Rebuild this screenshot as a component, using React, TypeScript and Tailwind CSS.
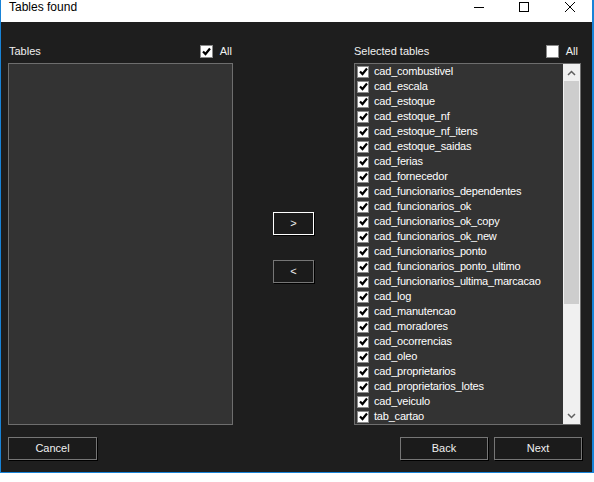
import React from 'react';

const tables = [
  'cad_combustivel',
  'cad_escala',
  'cad_estoque',
  'cad_estoque_nf',
  'cad_estoque_nf_itens',
  'cad_estoque_saidas',
  'cad_ferias',
  'cad_fornecedor',
  'cad_funcionarios_dependentes',
  'cad_funcionarios_ok',
  'cad_funcionarios_ok_copy',
  'cad_funcionarios_ok_new',
  'cad_funcionarios_ponto',
  'cad_funcionarios_ponto_ultimo',
  'cad_funcionarios_ultima_marcacao',
  'cad_log',
  'cad_manutencao',
  'cad_moradores',
  'cad_ocorrencias',
  'cad_oleo',
  'cad_proprietarios',
  'cad_proprietarios_lotes',
  'cad_veiculo',
  'tab_cartao',
];

function CheckBox({ checked, size = 13 }: { checked: boolean; size?: number }) {
  return (
    <span
      className="flex items-center justify-center bg-white border border-[#8a8a8a] shrink-0"
      style={{ width: size, height: size }}
    >
      {checked && (
        <svg width="9" height="9" viewBox="0 0 9 9">
          <path d="M1 4.5 L3.5 7 L8 1.5" stroke="#000" strokeWidth="2.2" fill="none" />
        </svg>
      )}
    </span>
  );
}

function Button({ children, focused = false, className = '' }: { children: React.ReactNode; focused?: boolean; className?: string }) {
  return (
    <div
      className={
        'flex items-center justify-center bg-[#1b1b1b] text-[#f0f0f0] text-[11px] shadow-[1px_1px_0_#000] ' +
        (focused ? 'border border-white ' : 'border border-[#767676] ') +
        className
      }
    >
      {children}
    </div>
  );
}

export default function App() {
  return (
    <div className="w-[594px] h-[482px] bg-white" style={{ fontFamily: '"Liberation Sans", Arial, sans-serif' }}>
      <div className="w-[594px] h-[473px] border-l border-r-2 border-b border-[#1883d7] flex flex-col">
        {/* Title bar */}
        <div className="h-[22px] bg-white flex items-start shrink-0">
          <span className="pl-[8px] pt-[0px] text-[12px] leading-[14px] text-black">Tables found</span>
          <svg className="ml-auto" width="137" height="22" viewBox="0 0 137 22">
            <path d="M19 7.5 H29" stroke="#000" strokeWidth="1" />
            <rect x="64.5" y="2.5" width="9" height="9" stroke="#000" strokeWidth="1" fill="none" />
            <path d="M110 2 L120 12 M120 2 L110 12" stroke="#000" strokeWidth="1" />
          </svg>
        </div>

        {/* Body */}
        <div className="flex-1 bg-[#1e1e1e] flex flex-col pl-[7px] pr-[10px] pt-[18px]">
          <div className="flex">
            {/* Left column */}
            <div className="w-[225px] flex flex-col">
              <div className="h-[22px] flex items-center text-[11px] text-[#f0f0f0]">
                <span className="pl-[1px]">Tables</span>
                <div className="ml-auto flex items-center gap-[7px] pr-[1px]">
                  <CheckBox checked />
                  <span>All</span>
                </div>
              </div>
              <div className="mt-[1px] h-[362px] bg-[#333333] border border-[#6e6e6e]" />
            </div>

            {/* Middle buttons */}
            <div className="w-[121px] flex flex-col items-center pt-[172px]">
              <Button focused className="w-[41px] h-[23px]">&gt;</Button>
              <Button className="w-[41px] h-[23px] mt-[25px]">&lt;</Button>
            </div>

            {/* Right column */}
            <div className="w-[227px] flex flex-col">
              <div className="h-[22px] flex items-center text-[11px] text-[#f0f0f0]">
                <span>Selected tables</span>
                <div className="ml-auto flex items-center gap-[7px] pr-[3px]">
                  <CheckBox checked={false} />
                  <span>All</span>
                </div>
              </div>
              <div className="mt-[1px] h-[362px] bg-[#333333] border border-[#6e6e6e] flex overflow-hidden">
                <div className="flex-1 flex flex-col">
                  {tables.map((t) => (
                    <div
                      key={t}
                      className="h-[15px] flex items-center pl-[2px] gap-[5px] text-[11px] tracking-[-0.2px] text-white whitespace-nowrap"
                    >
                      <CheckBox checked size={12} />
                      <span>{t}</span>
                    </div>
                  ))}
                </div>
                <div className="w-[17px] bg-[#f0f0f0] flex flex-col">
                  <div className="h-[17px] flex items-center justify-center">
                    <svg width="9" height="6" viewBox="0 0 9 6">
                      <path d="M1 5 L4.5 1.5 L8 5" stroke="#606060" strokeWidth="1.5" fill="none" />
                    </svg>
                  </div>
                  <div className="h-[223px] mx-[1px] bg-[#cdcdcd]" />
                  <div className="flex-1" />
                  <div className="h-[17px] flex items-center justify-center">
                    <svg width="9" height="6" viewBox="0 0 9 6">
                      <path d="M1 1 L4.5 4.5 L8 1" stroke="#606060" strokeWidth="1.5" fill="none" />
                    </svg>
                  </div>
                </div>
              </div>
            </div>
          </div>

          {/* Bottom buttons */}
          <div className="flex mt-[12px]">
            <Button className="w-[89px] h-[23px]">Cancel</Button>
            <Button className="w-[88px] h-[23px] ml-auto">Back</Button>
            <Button className="w-[88px] h-[23px] ml-[6px]">Next</Button>
          </div>
        </div>
      </div>
    </div>
  );
}
